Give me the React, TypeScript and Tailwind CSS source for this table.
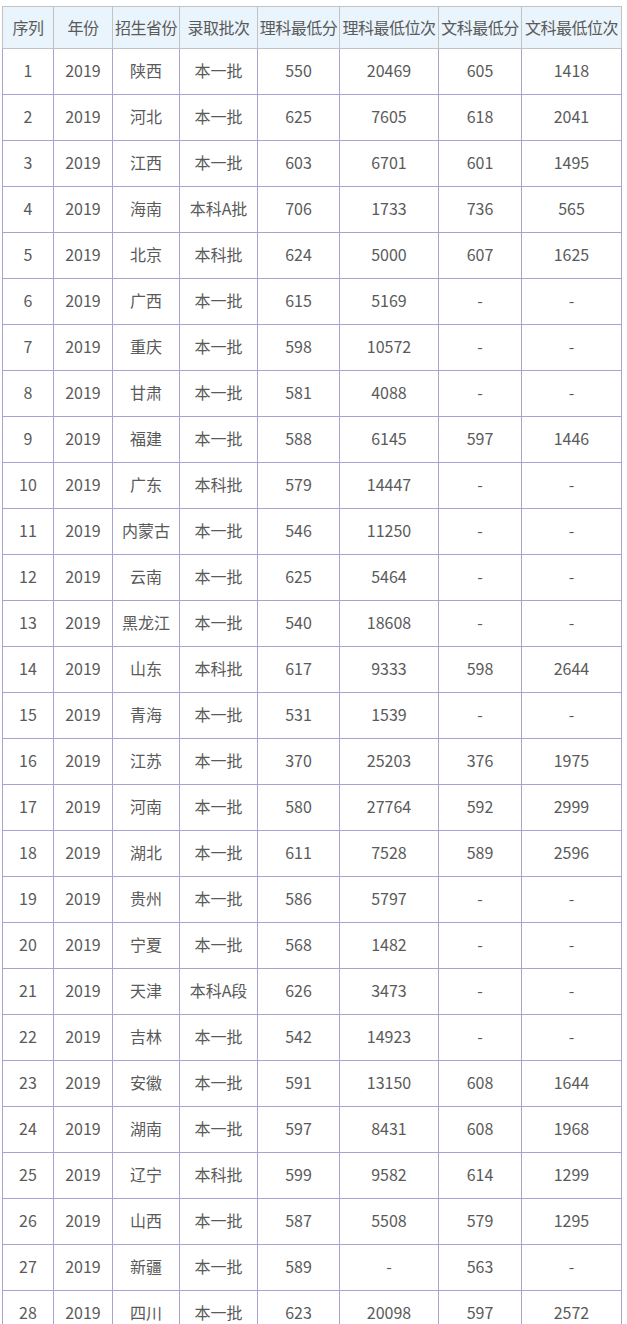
const headers = ["序列", "年份", "招生省份", "录取批次", "理科最低分", "理科最低位次", "文科最低分", "文科最低位次"];

const widths = ["w-[51px]", "w-[59px]", "w-[67px]", "w-[78px]", "w-[82px]", "w-[99px]", "w-[83px]", "w-[100px]"];

const rows: string[][] = [
  ["陕西", "本一批", "550", "20469", "605", "1418"],
  ["河北", "本一批", "625", "7605", "618", "2041"],
  ["江西", "本一批", "603", "6701", "601", "1495"],
  ["海南", "本科A批", "706", "1733", "736", "565"],
  ["北京", "本科批", "624", "5000", "607", "1625"],
  ["广西", "本一批", "615", "5169", "-", "-"],
  ["重庆", "本一批", "598", "10572", "-", "-"],
  ["甘肃", "本一批", "581", "4088", "-", "-"],
  ["福建", "本一批", "588", "6145", "597", "1446"],
  ["广东", "本科批", "579", "14447", "-", "-"],
  ["内蒙古", "本一批", "546", "11250", "-", "-"],
  ["云南", "本一批", "625", "5464", "-", "-"],
  ["黑龙江", "本一批", "540", "18608", "-", "-"],
  ["山东", "本科批", "617", "9333", "598", "2644"],
  ["青海", "本一批", "531", "1539", "-", "-"],
  ["江苏", "本一批", "370", "25203", "376", "1975"],
  ["河南", "本一批", "580", "27764", "592", "2999"],
  ["湖北", "本一批", "611", "7528", "589", "2596"],
  ["贵州", "本一批", "586", "5797", "-", "-"],
  ["宁夏", "本一批", "568", "1482", "-", "-"],
  ["天津", "本科A段", "626", "3473", "-", "-"],
  ["吉林", "本一批", "542", "14923", "-", "-"],
  ["安徽", "本一批", "591", "13150", "608", "1644"],
  ["湖南", "本一批", "597", "8431", "608", "1968"],
  ["辽宁", "本科批", "599", "9582", "614", "1299"],
  ["山西", "本一批", "587", "5508", "579", "1295"],
  ["新疆", "本一批", "589", "-", "563", "-"],
  ["四川", "本一批", "623", "20098", "597", "2572"],
];

export default function App() {
  return (
    <div className="h-[1324px] overflow-hidden bg-white pt-[6px] pl-[2px] font-['Noto_Sans_CJK_SC','Noto_Sans',sans-serif] text-[16px] text-[#5a5a5a]">
      <table className="w-[619px] table-fixed border-collapse">
        <colgroup>
          {widths.map((w, i) => (
            <col key={i} className={w} />
          ))}
        </colgroup>
        <thead>
          <tr className="h-[42px] bg-[#e9f4fc]">
            {headers.map((h) => (
              <th key={h} className="border border-[#c2c2c2] p-0 pb-[2px] text-center font-normal whitespace-nowrap tracking-[-0.5px]">
                {h}
              </th>
            ))}
          </tr>
        </thead>
        <tbody>
          {rows.map((r, i) => (
            <tr key={i} className="h-[46px]">
              <td className="border border-[#aba2d4] p-0 pb-[4px] text-center">{i + 1}</td>
              <td className="border border-[#aba2d4] p-0 pb-[4px] text-center">2019</td>
              {r.map((c, j) => (
                <td key={j} className="border border-[#aba2d4] p-0 pb-[4px] text-center whitespace-nowrap">
                  {c}
                </td>
              ))}
            </tr>
          ))}
        </tbody>
      </table>
    </div>
  );
}
